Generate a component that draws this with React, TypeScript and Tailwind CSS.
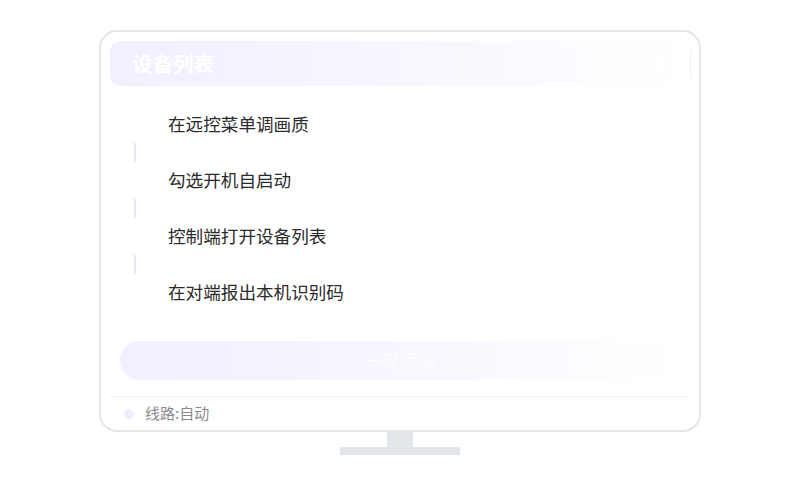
export default function App() {
  const steps = ["在远控菜单调画质", "勾选开机自启动", "控制端打开设备列表", "在对端报出本机识别码"];

  return (
    <div
      className="w-[800px] h-[500px] bg-white flex flex-col items-center pt-[30px]"
      style={{ fontFamily: '"Noto Sans CJK SC", "Noto Sans", sans-serif' }}
    >
      {/* monitor */}
      <div className="w-[602px] h-[402px] border-2 border-[#e3e6ea] rounded-[18px] bg-white flex flex-col p-[9px] pb-0">
        <div className="h-[45px] w-[581px] rounded-[11px] bg-gradient-to-r from-[#f2efff] via-[#f8f6ff] to-white flex items-center justify-between pl-[22px] pr-0">
          <span className="text-[20.5px] font-bold text-white leading-none">设备列表</span>
          <div className="flex items-center gap-[24px]">
            <span className="text-[14px] text-white/90">设置</span>
            <span className="w-[1px] h-[30px] bg-[#f1f1f5]" />
          </div>
        </div>

        <div className="flex flex-col mt-[20px]">
          {steps.map((s, i) => (
            <div key={s} className="flex flex-col">
              <div className="h-[36px] flex items-center pl-[58px] text-[17.6px] text-[#2b2b2b]">{s}</div>
              {i < steps.length - 1 && (
                <div className="h-[20px] pl-[24px] flex items-center">
                  <span className="w-[2px] h-[19px] bg-[#e4e4f2] rounded-full" />
                </div>
              )}
            </div>
          ))}
        </div>

        <button className="mt-[31px] ml-[10px] w-[559px] h-[39px] rounded-full bg-gradient-to-r from-[#f2efff] via-[#f8f6ff] to-white text-white text-[18px] font-light">
          一键添加
        </button>

        <div className="mt-[16px] w-[577px] h-[1px] bg-[#eceef2]" />
        <div className="flex-1 flex items-center pl-[14px] gap-[11px]">
          <span className="w-[10px] h-[10px] rounded-full bg-[#efecff]" />
          <span className="text-[15px] text-[#8a8a8f]">线路:自动</span>
        </div>
      </div>
      {/* stand */}
      <div className="w-[26px] h-[15px] bg-[#e2e5e9]" />
      <div className="w-[120px] h-[8px] bg-[#e2e5e9]" />
    </div>
  );
}
